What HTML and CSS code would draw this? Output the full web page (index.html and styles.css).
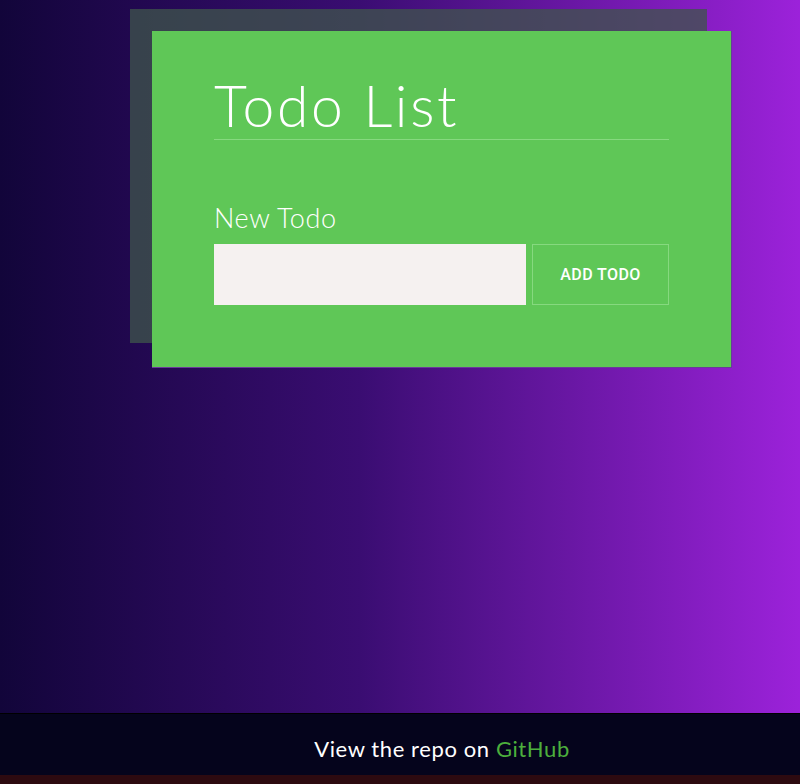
FILE: index.html
```html
<!DOCTYPE html>
<html lang="en">
<head>
<meta charset="utf-8">
<title>Todo List</title>
<link rel="stylesheet" href="styles.css">
</head>
<body>
<main class="stage">
  <section class="card">
    <h1 class="title">Todo List</h1>
    <form class="todo-form">
      <label class="label" for="new-todo">New Todo</label>
      <div class="row">
        <input id="new-todo" class="input" type="text">
        <button type="button" class="add-btn">ADD TODO</button>
      </div>
    </form>
  </section>
</main>
<footer class="footer">
  <p class="footer-text">View the repo on <a class="gh" href="#">GitHub</a></p>
</footer>
<div class="bottom-strip"></div>
</body>
</html>
```

FILE: styles.css
```css
html, body {
  margin: 0;
  padding: 0;
  height: 100%;
}
body {
  display: flex;
  flex-direction: column;
  height: 784px;
  font-family: "Lato", "Noto Sans", sans-serif;
  color: #fff;
  overflow: hidden;
}
.stage {
  flex: 1;
  isolation: isolate;
  background: linear-gradient(to right, #12053a 0%, #3a0d72 45%, #9c22da 100%);
  padding: 31px 0 0 152px;
}
.card {
  position: relative;
  width: 580px;
  height: 337px;
  box-sizing: border-box;
  background: #5fc757;
  border-right: 1px solid #6a3a9a;
  border-bottom: 1px solid #6a3a9a;
  padding: 0 62px;
}
.card::before {
  content: "";
  position: absolute;
  left: -22px;
  top: -22px;
  width: 577px;
  height: 334px;
  background: rgba(63, 84, 75, 0.77);
  z-index: -1;
}
.title {
  margin: 0;
  padding-top: 42px;
  font-weight: 300;
  font-size: 57px;
  line-height: 64px;
  letter-spacing: 2.6px;
  padding-bottom: 2px;
  border-bottom: 1px solid #86d97f;
}
.todo-form {
  display: flex;
  flex-direction: column;
  margin-top: 61px;
}
.label {
  font-size: 27px;
  font-weight: 300;
  line-height: 34px;
  letter-spacing: 0.6px;
  margin-bottom: 9px;
}
.row {
  display: flex;
  gap: 6px;
}
.input {
  width: 312px;
  height: 61px;
  box-sizing: border-box;
  border: none;
  background: #f5f1f0;
  margin: 0;
}
.add-btn {
  width: 137px;
  height: 61px;
  box-sizing: border-box;
  background: transparent;
  border: 1px solid #86d97f;
  color: #fff;
  font-family: "Roboto", "Noto Sans", sans-serif;
  font-size: 16px;
  font-weight: 500;
  letter-spacing: 0.4px;
  margin: 0;
  padding: 0;
}
.footer {
  height: 62px;
  box-sizing: border-box;
  background: #05041c;
  border-top: 1px solid #000;
  display: flex;
  align-items: center;
  justify-content: center;
  padding-left: 84px;
  padding-top: 8px;
}
.footer-text {
  margin: 0;
  font-size: 22px;
  font-weight: 400;
  letter-spacing: 0.6px;
}
.gh {
  color: #4caf3c;
  text-decoration: none;
}
.bottom-strip {
  height: 9px;
  background: #2d0a10;
}
```
